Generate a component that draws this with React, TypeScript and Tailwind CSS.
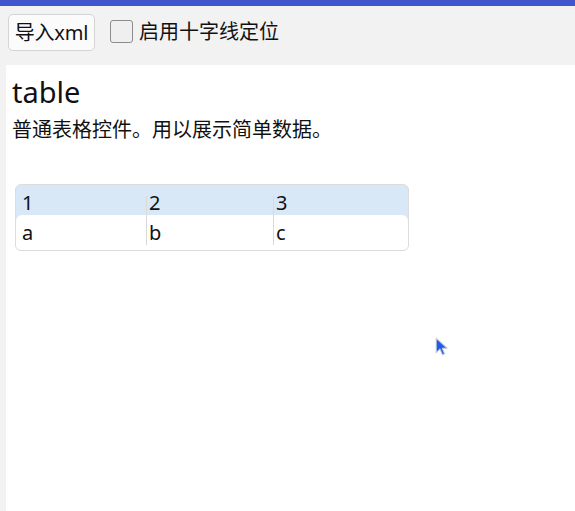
const font = { fontFamily: '"Noto Sans", "Noto Sans CJK SC", sans-serif' };

const head = ["1", "2", "3"];
const rows = [["a", "b", "c"]];

function Cell({ text, first, header }: { text: string; first: boolean; header: boolean }) {
  return (
    <div className="flex items-stretch">
      {first ? null : (
        <div className={`w-px bg-[#d9d9d9] ${header ? "mt-[5px]" : "mb-[5px]"}`} />
      )}
      <div className={`flex items-center text-[20px] leading-none text-[#111] ${first ? "pl-[6px]" : "pl-[2px]"}`}>
        {text}
      </div>
    </div>
  );
}

export default function App() {
  return (
    <div className="relative flex min-h-screen flex-col bg-[#f2f2f2]" style={font}>
      <div className="h-[6px] bg-[#4355cc]" />

      <div className="flex h-[59px] items-start gap-[15px] pl-[8px] pt-[8px]">
        <button className="h-[37px] w-[87px] rounded-[5px] border border-[#d4d4d4] bg-[#fbfbfb] text-[20px] leading-none tracking-[-0.2px] text-[#111]">
          导入xml
        </button>
        <label className="mt-[6px] flex items-center gap-[6px] text-[20px] leading-none text-[#111]">
          <span className="h-[23px] w-[23px] rounded-[3px] border border-[#8c8c8c] bg-[#efefef]" />
          启用十字线定位
        </label>
      </div>

      <div className="ml-[6px] flex-1 bg-white pl-[6px] pt-[8px]">
        <h1 className="text-[29px] leading-[38px] text-[#111]">table</h1>
        <p className="mt-[7px] text-[20px] leading-[24px] text-[#111]">普通表格控件。用以展示简单数据。</p>

        <div className="ml-[3px] mt-[42px] w-[394px] overflow-hidden rounded-[6px] border border-[#dcdcdc] bg-[#d8e8f7]">
          <div className="grid h-[30px] grid-cols-[130px_127px_1fr] pt-[6px]">
            {head.map((h, i) => (
              <Cell key={h} text={h} first={i === 0} header />
            ))}
          </div>
          {rows.map((r, ri) => (
            <div key={ri} className="grid h-[35px] grid-cols-[130px_127px_1fr] rounded-t-[6px] bg-white">
              {r.map((c, i) => (
                <Cell key={c} text={c} first={i === 0} header={false} />
              ))}
            </div>
          ))}
        </div>
      </div>

      <svg
        className="absolute left-[435px] top-[337px]"
        width="15"
        height="21"
        viewBox="0 0 14 20"
      >
        <path
          d="M1 1 L1 15 L4.5 11.5 L7 17 L9 16 L6.8 10.8 L11.5 10.8 Z"
          fill="#1d5cf2"
          stroke="#c8cbd4"
          strokeWidth="1"
          strokeLinejoin="round"
        />
      </svg>
    </div>
  );
}
